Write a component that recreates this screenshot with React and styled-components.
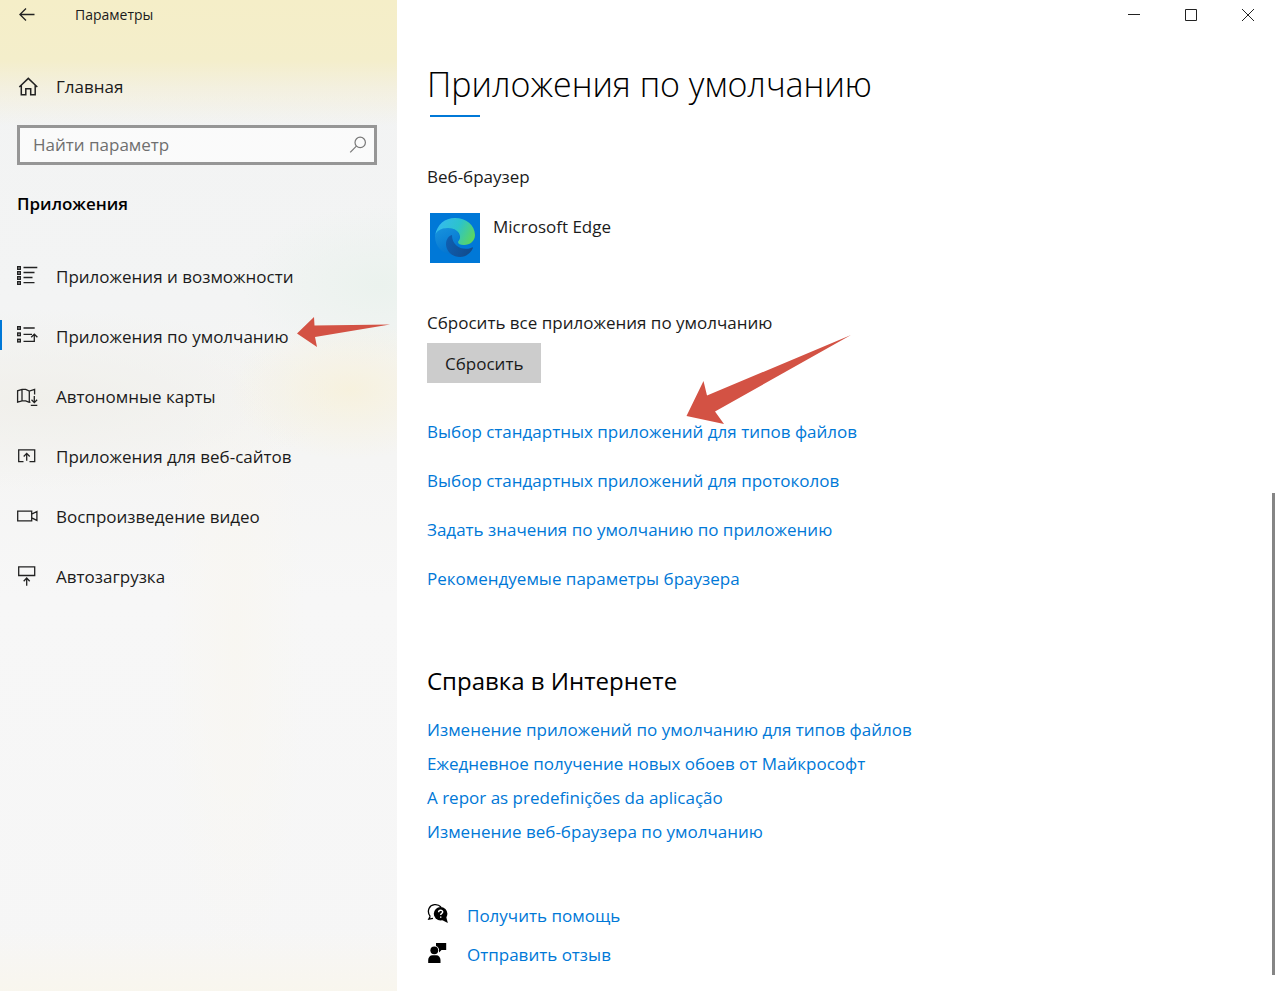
import React from "react";
import styled, { createGlobalStyle } from "styled-components";

const Global = createGlobalStyle`
  *, *::before, *::after { box-sizing: border-box; }
  body {
    margin: 0;
    background: #fff;
    color: #1b1b1b;
    font: 400 17px/24px "Open Sans", "Noto Sans", sans-serif;
  }
  button, input { font: inherit; color: inherit; }
  svg { display: block; flex: none; }
  h1, h2, p, ul { margin: 0; padding: 0; }
  ul { list-style: none; }
`;

const Window = styled.div`
  display: flex;
  min-height: 100vh;
`;

const Sidebar = styled.aside`
  flex: 0 0 397px;
  background:
    linear-gradient(to bottom, #f5eec8 0, #f4eecb 60px, rgba(244, 238, 210, 0.6) 88px, rgba(244, 240, 225, 0) 125px),
    radial-gradient(ellipse 120px 70px at 350px 390px, rgba(247, 241, 220, 0.9), rgba(247, 241, 220, 0) 100%),
    radial-gradient(ellipse 140px 80px at 380px 285px, rgba(234, 242, 237, 0.9), rgba(234, 242, 237, 0) 100%),
    radial-gradient(ellipse 300px 90px at 40px 400px, rgba(240, 239, 234, 0.9), rgba(240, 239, 234, 0) 100%),
    radial-gradient(ellipse 70px 340px at 236px 640px, rgba(248, 246, 241, 0.9), rgba(248, 246, 241, 0) 100%),
    linear-gradient(to top, rgba(249, 246, 236, 0.8) 0, rgba(249, 246, 236, 0) 60px),
    linear-gradient(to bottom, #f2f3f3 0, #f3f4f4 300px, #f5f5f4 460px, #f7f7f7 600px, #f6f6f6 100%);
`;

const SideBar = styled.header`
  display: flex;
  align-items: center;
  height: 30px;
  font-size: 14px;
`;

const BackButton = styled.button`
  width: 57px;
  height: 30px;
  padding: 0 0 0 19px;
  margin-right: 18px;
  border: 0;
  background: none;
`;

const SideLink = styled.a`
  position: relative;
  display: flex;
  align-items: center;
  gap: 18px;
  height: ${(p) => (p.$home ? 50 : 60)}px;
  margin-top: ${(p) => (p.$home ? 32 : 0)}px;
  padding-left: 16px;
  color: #1b1b1b;
  text-decoration: none;
  ${(p) =>
    p.$active &&
    `&::before {
      content: "";
      position: absolute;
      left: 0;
      top: 13px;
      width: 2px;
      height: 30px;
      background: #0078d7;
    }`}
`;

const Search = styled.label`
  display: flex;
  align-items: center;
  height: 40px;
  margin: 13px 20px 0 17px;
  padding: 0 7px 0 13px;
  border: 3px solid #969696;
  background: rgba(255, 255, 255, 0.6);
  color: #6f6f6f;
`;

const SearchInput = styled.input`
  flex: 1;
  min-width: 0;
  padding: 0;
  border: 0;
  outline: 0;
  background: none;
  &::placeholder { color: #6f6f6f; opacity: 1; }
`;

const SideHeading = styled.h2`
  margin: 27px 0 31px 17px;
  font-size: 17px;
  line-height: 24px;
  font-weight: 600;
  color: #000;
`;

const Main = styled.main`
  display: flex;
  flex-direction: column;
  flex: 1;
  min-width: 0;
`;

const Controls = styled.div`
  display: flex;
  justify-content: flex-end;
`;

const ControlButton = styled.button`
  display: grid;
  place-items: center;
  width: 57px;
  height: 30px;
  padding: 0;
  border: 0;
  background: none;
`;

const Body = styled.div`
  display: flex;
  flex: 1;
`;

const Content = styled.div`
  flex: 1;
  min-width: 0;
  padding: 30px 0 20px 30px;
`;

const Title = styled.h1`
  font-size: 34px;
  line-height: 48px;
  font-weight: 300;
  color: #000;
  &::after {
    content: "";
    display: block;
    width: 50px;
    height: 2px;
    margin: 7px 0 0 3px;
    background: #0078d7;
  }
`;

const Label = styled.p`
  margin-top: ${(p) => p.$top}px;
`;

const AppButton = styled.button`
  display: flex;
  align-items: flex-start;
  gap: 13px;
  margin-top: 24px;
  padding: 0 0 0 3px;
  border: 0;
  background: none;
  line-height: 28px;
`;

const ResetButton = styled.button`
  display: block;
  height: 40px;
  margin-top: 8px;
  padding: 2px 18px 0;
  border: 0;
  background: #ccc;
`;

const Links = styled.ul`
  position: relative;
  display: flex;
  flex-direction: column;
  gap: ${(p) => p.$gap}px;
  margin-top: ${(p) => p.$top}px;
`;

const Link = styled.a`
  display: flex;
  align-items: center;
  gap: 18px;
  width: fit-content;
  height: 24px;
  color: #0078d7;
  text-decoration: none;
  svg { margin-bottom: 4px; }
`;

const Section = styled.h2`
  margin-top: 73px;
  font-size: 24px;
  line-height: 34px;
  font-weight: 400;
  color: #000;
`;

const Rail = styled.div`
  display: flex;
  flex-direction: column;
  justify-content: flex-end;
  width: 4px;
  padding: 0 1px 16px 0;
`;

const Thumb = styled.div`
  height: 51%;
  background: #858585;
`;

const SmallArrow = styled.svg`
  position: absolute;
  left: 297px;
  top: 9px;
`;

const BigArrow = styled.svg`
  position: absolute;
  left: 259px;
  top: -86px;
`;

const Icon = ({ children, color = "#222" }) => (
  <svg width="22" height="22" viewBox="0 0 22 22" fill="none" stroke={color} strokeWidth="1.3" aria-hidden="true">
    {children}
  </svg>
);

const HomeIcon = () => (
  <Icon>
    <path d="M3.3 11 12.3 2.4 21.3 11M5.3 9.5V18.8H9.8V12.8H14.7V18.8H19.2V9.5" strokeWidth="1.5" />
  </Icon>
);

const Dots = ({ rows }) =>
  rows.map((y) => (
    <React.Fragment key={y}>
      <rect x="1" y={y} width="4" height="4" fill="#222" stroke="none" />
      <rect x="2.4" y={y + 1.4} width="1.2" height="1.2" fill="#ddd" stroke="none" />
    </React.Fragment>
  ));

const FeaturesIcon = () => (
  <Icon>
    <Dots rows={[0, 5, 10, 15]} />
    <path d="M7.5 1.5H21.3M7.5 6.5H18.5M7.5 11.5H16.5M7.5 16.7H18.5" />
  </Icon>
);

const DefaultsIcon = () => (
  <Icon>
    <Dots rows={[0, 6.3, 12.6]} />
    <path d="M7.5 2H18.7M7.5 8.4H16M7.5 15.3H18.3V8.6M15.2 11.3 18.3 8.2 21.4 11.3" />
  </Icon>
);

const MapIcon = () => (
  <Icon>
    <path d="M14.5 16 13.3 16.4 9.7 14.8 6 14.8 1.6 16.2V4.8L6 3.4 9.7 3.4 13.3 5 18.6 3.3V8.5M6 3.4V14.8M13.3 5V16.4M18.3 10V16.5M15.5 13.8 18.3 16.6 21.1 13.8M14.8 19.3H21.3" />
  </Icon>
);

const SitesIcon = () => (
  <Icon>
    <path d="M7.5 15.7H2.7V3.9H18.7V15.7H13.5M10.7 14.8V7.6M7.7 10.5 10.7 7.4 13.7 10.5" />
  </Icon>
);

const VideoIcon = () => (
  <Icon>
    <path d="M1.7 5.2H15.7V14.8H1.7ZM15.7 8.2 20.9 5.5V14.4L15.7 11.8" />
  </Icon>
);

const StartupIcon = () => (
  <Icon>
    <path d="M2.7 .8H18.7V9.5H2.7ZM10.7 19.8V12.2M7.7 15.2 10.7 12 13.7 15.2" />
  </Icon>
);

const EdgeLogo = () => (
  <svg width="50" height="50" viewBox="0 0 50 50" aria-hidden="true">
    <defs>
      <linearGradient id="edgeTop" x1="6" y1="10" x2="44" y2="30" gradientUnits="userSpaceOnUse">
        <stop offset="0" stopColor="#36b9f2" />
        <stop offset="0.5" stopColor="#2cc3cc" />
        <stop offset="1" stopColor="#62d94f" />
      </linearGradient>
      <linearGradient id="edgeLeft" x1="10" y1="16" x2="22" y2="40" gradientUnits="userSpaceOnUse">
        <stop offset="0" stopColor="#1690dc" />
        <stop offset="1" stopColor="#0374d0" />
      </linearGradient>
      <linearGradient id="edgeDark" x1="16" y1="30" x2="42" y2="40" gradientUnits="userSpaceOnUse">
        <stop offset="0" stopColor="#0f5eb0" />
        <stop offset="1" stopColor="#124a8b" />
      </linearGradient>
    </defs>
    <rect width="50" height="50" fill="#0078d7" />
    <path d="M5 23C6 17 13 14 20 15C26 16 30 20 29 25L24 42C12 41 5 34 5 23Z" fill="url(#edgeLeft)" />
    <path d="M5 23C7 11 15 5 25 5C36 5 45 12 45 22C45 28 40 32 34 32C30 32 28 31 28 29C28 28 30 27 30 24C30 19 25 15 18 15C11 15 6 18 5 23Z" fill="url(#edgeTop)" />
    <path d="M22 22C18 23 16 27 16 31C16 38 22 44 30 44C36 44 41 40 43 35C43 34 42 34 41 35C32 38 22 33 22 22Z" fill="url(#edgeDark)" />
  </svg>
);

const HelpIcon = () => (
  <Icon color="#000">
    <path d="M3.2 13.4C1.3 11 1 8 2 5.5C4 1 10.5 .2 14 4M3.2 13.4 1.8 16.2 6 15.4" />
    <circle cx="13.6" cy="10.7" r="6.8" fill="#000" stroke="none" />
    <path d="M14 16.5 20.8 20 19 13Z" fill="#000" stroke="none" />
    <path d="M11.6 9.2C11.6 6.6 15.8 6.8 15.7 9C15.6 10.4 13.7 10.3 13.7 12M13.7 13.4V14.8" stroke="#fff" strokeWidth="1.4" />
  </Icon>
);

const FeedbackIcon = () => (
  <Icon color="none">
    <g fill="#000">
      <circle cx="7.3" cy="8.3" r="3.9" />
      <path d="M1.2 21V18C1.2 15.3 3 13.2 5.5 13.2H9.2C11.8 13.2 13.5 15.3 13.5 18V21ZM9 1H19.2V8H14.5L12 10.4V7.3C11.3 5.3 10.5 4.6 9 4Z" />
    </g>
  </Icon>
);

const NAV = [
  ["Приложения и возможности", FeaturesIcon],
  ["Приложения по умолчанию", DefaultsIcon],
  ["Автономные карты", MapIcon],
  ["Приложения для веб-сайтов", SitesIcon],
  ["Воспроизведение видео", VideoIcon],
  ["Автозагрузка", StartupIcon],
];

const DEFAULTS = [
  "Выбор стандартных приложений для типов файлов",
  "Выбор стандартных приложений для протоколов",
  "Задать значения по умолчанию по приложению",
  "Рекомендуемые параметры браузера",
];

const HELP = [
  "Изменение приложений по умолчанию для типов файлов",
  "Ежедневное получение новых обоев от Майкрософт",
  "A repor as predefinições da aplicação",
  "Изменение веб-браузера по умолчанию",
];

const CONTROLS = [
  ["Свернуть", "M1 6.5H13"],
  ["Развернуть", "M1.5 1.5H12.5V12.5H1.5Z"],
  ["Закрыть", "M1 1 13 13M13 1 1 13"],
];

export default function App() {
  return (
    <>
      <Global />
      <Window>
        <Sidebar>
          <SideBar>
            <BackButton aria-label="Назад">
              <svg width="16" height="14" viewBox="0 0 16 14" fill="none" stroke="#222" strokeWidth="1.3">
                <path d="M15.5 6.5H1M7 .5 .9 6.5 7 12.5" />
              </svg>
            </BackButton>
            Параметры
          </SideBar>
          <SideLink href="#home" $home>
            <HomeIcon />
            Главная
          </SideLink>
          <Search>
            <SearchInput type="text" placeholder="Найти параметр" aria-label="Найти параметр" />
            <svg width="18" height="18" viewBox="0 0 18 18" fill="none" stroke="#777" strokeWidth="1.2" aria-hidden="true">
              <circle cx="11.2" cy="6.4" r="5.2" />
              <path d="M7.4 10.2 1.2 16.4" />
            </svg>
          </Search>
          <SideHeading>Приложения</SideHeading>
          <nav>
            {NAV.map(([text, NavIcon], i) => (
              <SideLink key={text} href={`#page-${i}`} $active={i === 1}>
                <NavIcon />
                {text}
                {i === 1 && (
                  <SmallArrow width="94" height="32" viewBox="0 0 94 32" aria-hidden="true">
                    <path d="M0 17.5 17 1 17.5 9.5 93 8.5 18 21 20 31Z" fill="#d35244" />
                  </SmallArrow>
                )}
              </SideLink>
            ))}
          </nav>
        </Sidebar>
        <Main>
          <Controls>
            {CONTROLS.map(([name, d]) => (
              <ControlButton key={name} aria-label={name}>
                <svg width="14" height="14" viewBox="0 0 14 14" fill="none" stroke="#222" strokeWidth="1">
                  <path d={d} />
                </svg>
              </ControlButton>
            ))}
          </Controls>
          <Body>
            <Content>
              <Title>Приложения по умолчанию</Title>
              <Label $top={48}>Веб-браузер</Label>
              <AppButton>
                <EdgeLogo />
                Microsoft Edge
              </AppButton>
              <Label $top={48}>Сбросить все приложения по умолчанию</Label>
              <ResetButton>Сбросить</ResetButton>
              <Links $gap={25} $top={37}>
                {DEFAULTS.map((t) => (
                  <li key={t}>
                    <Link href="#defaults">{t}</Link>
                  </li>
                ))}
                <BigArrow width="166" height="92" viewBox="0 0 166 92" aria-hidden="true">
                  <path d="M165 1 21 61.5 17.5 47 .5 82 38 90 29 77.5Z" fill="#d35244" />
                </BigArrow>
              </Links>
              <Section>Справка в Интернете</Section>
              <Links $gap={10} $top={20}>
                {HELP.map((t) => (
                  <li key={t}>
                    <Link href="#help">{t}</Link>
                  </li>
                ))}
              </Links>
              <Links $gap={15} $top={60}>
                <li>
                  <Link href="#support">
                    <HelpIcon />
                    Получить помощь
                  </Link>
                </li>
                <li>
                  <Link href="#feedback">
                    <FeedbackIcon />
                    Отправить отзыв
                  </Link>
                </li>
              </Links>
            </Content>
            <Rail>
              <Thumb />
            </Rail>
          </Body>
        </Main>
      </Window>
    </>
  );
}
